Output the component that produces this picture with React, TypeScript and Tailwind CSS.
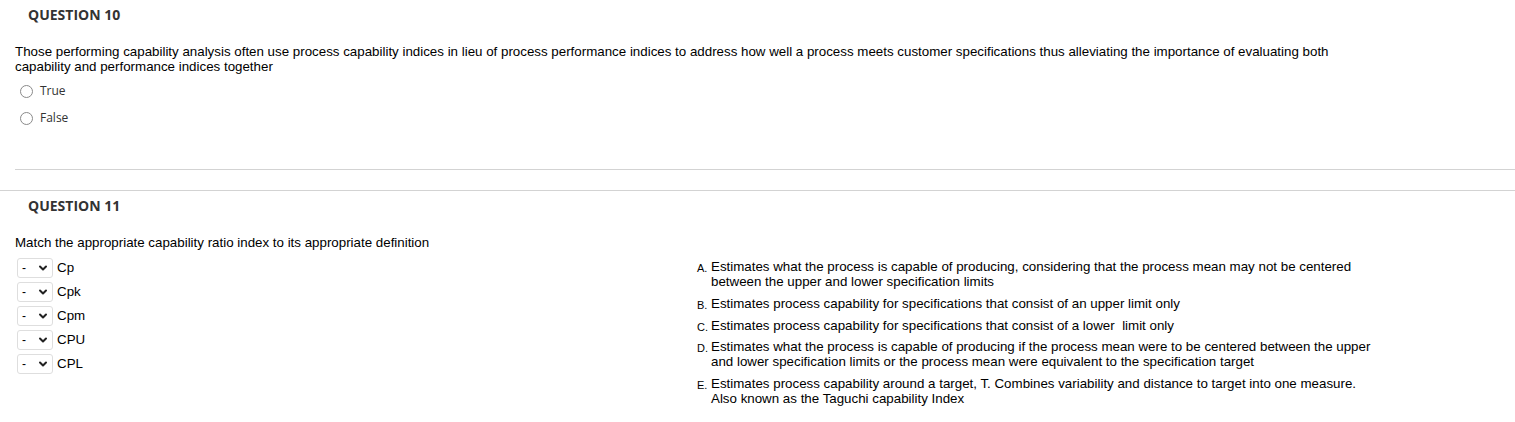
import { ChevronDown } from "lucide-react";

const ROWS = ["Cp", "Cpk", "Cpm", "CPU", "CPL"];

const ANSWERS: { letter: string; lines: string[] }[] = [
  {
    letter: "A.",
    lines: [
      "Estimates what the process is capable of producing, considering that the process mean may not be centered",
      "between the upper and lower specification limits",
    ],
  },
  { letter: "B.", lines: ["Estimates process capability for specifications that consist of an upper limit only"] },
  { letter: "C.", lines: ["Estimates process capability for specifications that consist of a lower\u00a0 limit only"] },
  {
    letter: "D.",
    lines: [
      "Estimates what the process is capable of producing if the process mean were to be centered between the upper",
      "and lower specification limits or the process mean were equivalent to the specification target",
    ],
  },
  {
    letter: "E.",
    lines: [
      "Estimates process capability around a target, T. Combines variability and distance to target into one measure.",
      "Also known as the Taguchi capability Index",
    ],
  },
];

function Heading({ children }: { children: string }) {
  return (
    <h2 className="pl-[28px] text-[14px] leading-[16px] font-bold text-[#333] [font-family:'Open_Sans',sans-serif]">
      {children}
    </h2>
  );
}

function Radio({ label }: { label: string }) {
  return (
    <label className="flex h-[20px] items-center pl-[20px]">
      <span className="h-[13px] w-[13px] rounded-full border border-[#8a8a8a] bg-white" />
      <span className="ml-[7px] text-[12px] text-[#333] [font-family:'Open_Sans',sans-serif]">{label}</span>
    </label>
  );
}

export default function App() {
  return (
    <div className="min-h-screen bg-white text-black [font-family:'Liberation_Sans',Arial,sans-serif]">
      <div className="pt-[7px]">
        <Heading>QUESTION 10</Heading>
        <p className="mt-[21px] pl-[15px] pr-[150px] text-[13.33px] leading-[15px]">
          Those performing capability analysis often use process capability indices in lieu of process performance indices to address how well a process meets customer specifications thus alleviating the importance of evaluating both capability and performance indices together
        </p>
        <div className="mt-[7px] flex flex-col gap-[7px]">
          <Radio label="True" />
          <Radio label="False" />
        </div>
        <div className="ml-[15px] mt-[41px] border-t border-[#d3d3d3]" />
      </div>

      <div className="mt-[20px] border-t border-[#d3d3d3] pt-[7px]">
        <Heading>QUESTION 11</Heading>
        <p className="mt-[21px] pl-[15px] text-[13.33px] leading-[15px]">
          Match the appropriate capability ratio index to its appropriate definition
        </p>
        <div className="mt-[8px] flex">
          <div className="flex w-[697px] flex-col gap-[4px] pl-[17px]">
            {ROWS.map((r) => (
              <div key={r} className="flex h-[20px] items-center">
                <div className="flex h-[20px] w-[36px] items-center rounded-[3px] border border-[#dedede] pl-[4px]">
                  <span className="text-[12px] leading-none">-</span>
                  <ChevronDown className="ml-[11px] h-[12px] w-[12px] text-[#222]" strokeWidth={4} />
                </div>
                <span className="ml-[4px] text-[13.33px] leading-[14px]">{r}</span>
              </div>
            ))}
          </div>
          <div className="mt-[1px] flex flex-col gap-[6.75px]">
            {ANSWERS.map((a) => (
              <div key={a.letter} className="flex items-start">
                <span className="w-[14px] translate-y-[2px] text-[11px] leading-[15px]">{a.letter}</span>
                <div className="text-[13.33px] leading-[15px]">
                  {a.lines.map((l) => (
                    <div key={l} className="whitespace-pre">{l}</div>
                  ))}
                </div>
              </div>
            ))}
          </div>
        </div>
      </div>
    </div>
  );
}
